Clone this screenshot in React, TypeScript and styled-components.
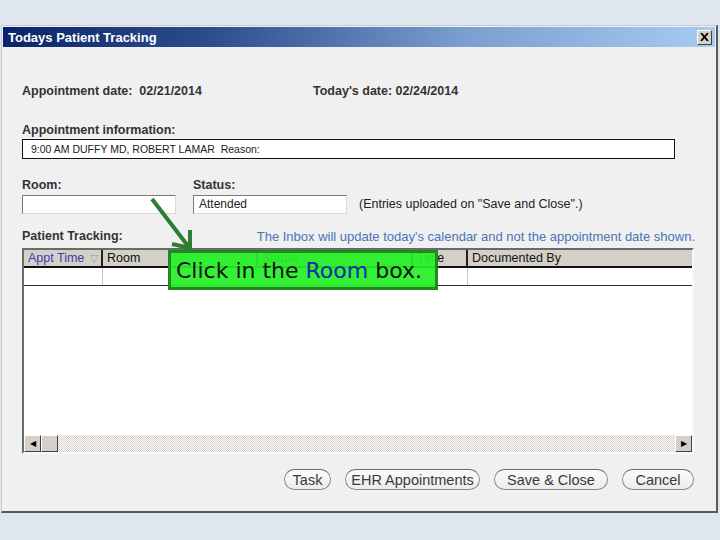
import React from "react";
import styled, { createGlobalStyle } from "styled-components";

const GlobalStyle = createGlobalStyle`
  html, body {
    margin: 0;
    padding: 0;
    background: #dfe6f0;
  }
  body {
    font-family: "Liberation Sans", Arial, sans-serif;
    width: 720px;
    height: 540px;
    overflow: hidden;
  }
`;

const Window = styled.div`
  position: relative;
  margin: 25px 0 0 1px;
  width: 717px;
  height: 488px;
  box-sizing: border-box;
  background: #f0f0f0;
  border-top: 1px solid #c8ccd2;
  border-left: 1px solid #c8ccd2;
  border-right: 2px solid #5a5a5a;
  border-bottom: 2px solid #5a5a5a;
  display: flex;
  flex-direction: column;
`;

const TitleBar = styled.div`
  margin: 1px 1px 0;
  height: 20px;
  display: flex;
  align-items: center;
  justify-content: space-between;
  padding: 0 3px 0 5px;
  background: linear-gradient(90deg, #0a246a 0%, #2e4e8e 30%, #7a9fd0 65%, #a8cbf1 100%);
`;

const Title = styled.span`
  color: #fff;
  font-size: 13px;
  font-weight: bold;
`;

const CloseBtn = styled.div`
  width: 15px;
  height: 15px;
  box-sizing: border-box;
  background: #d4d0c8;
  border: 1px solid;
  border-color: #fff #404040 #404040 #fff;
  display: flex;
  align-items: center;
  justify-content: center;
`;

const Content = styled.div`
  padding: 37px 21px 0 20px;
  display: flex;
  flex-direction: column;
`;

const DateRow = styled.div`
  display: flex;
  height: 14px;
  align-items: center;
`;

const DateItem = styled.div<{ $w?: number }>`
  width: ${(p) => (p.$w ? `${p.$w}px` : "auto")};
`;

const Label = styled.div<{ $mt?: number }>`
  font-size: 12.5px;
  font-weight: bold;
  color: #333;
  height: 14px;
  line-height: 14px;
  margin-top: ${(p) => p.$mt || 0}px;
  white-space: nowrap;
`;

const InfoBox = styled.div`
  margin-top: 2px;
  width: 653px;
  height: 20px;
  box-sizing: border-box;
  border: 1px solid #111;
  background: #fff;
  font-size: 10.5px;
  color: #222;
  line-height: 18px;
  padding-left: 8px;
  white-space: pre;
`;

const FieldRow = styled.div`
  margin-top: 19px;
  display: flex;
  align-items: flex-end;
`;

const Field = styled.div<{ $w: number }>`
  width: ${(p) => p.$w}px;
  display: flex;
  flex-direction: column;
`;

const TextBox = styled.div`
  margin-top: 3px;
  width: 154px;
  height: 19px;
  box-sizing: border-box;
  border: 1px solid;
  border-color: #7a7a7a #d8d8d8 #d8d8d8 #7a7a7a;
  background: #fff;
  font-size: 12px;
  color: #222;
  line-height: 17px;
  padding-left: 5px;
`;

const Note = styled.div`
  font-size: 12.5px;
  color: #222;
  height: 19px;
  line-height: 19px;
  margin-left: 12px;
  white-space: nowrap;
`;

const TrackRow = styled.div`
  margin-top: 15px;
  display: flex;
  justify-content: space-between;
  align-items: center;
  height: 14px;
`;

const InfoText = styled.span`
  font-size: 13px;
  color: #4a74b8;
  white-space: nowrap;
`;

const Table = styled.div`
  margin-top: 5px;
  width: 672px;
  height: 206px;
  box-sizing: border-box;
  border: 2px solid;
  border-color: #6a6a6a #f8f8f8 #f8f8f8 #6a6a6a;
  background: #fff;
  display: flex;
  flex-direction: column;
`;

const HeaderRow = styled.div`
  display: flex;
  height: 16px;
  background: #d4d0c8;
  border-bottom: 2px solid #111;
`;

const HeadCell = styled.div<{ $w: number; $blue?: boolean }>`
  width: ${(p) => p.$w}px;
  flex: ${(p) => (p.$w ? "none" : "1")};
  box-sizing: border-box;
  border-right: 2px solid #222;
  font-size: 12.5px;
  line-height: 16px;
  padding-left: 4px;
  color: ${(p) => (p.$blue ? "#3c3cb0" : "#111")};
  display: flex;
  justify-content: space-between;
  white-space: nowrap;
  &:last-child {
    border-right: none;
  }
`;

const SortMark = styled.span`
  color: #999;
  font-size: 11px;
  padding-right: 3px;
`;

const BodyRow = styled.div`
  display: flex;
  height: 17px;
  border-bottom: 1px solid #333;
`;

const BodyCell = styled.div<{ $w: number }>`
  width: ${(p) => p.$w}px;
  flex: ${(p) => (p.$w ? "none" : "1")};
  box-sizing: border-box;
  border-right: 1px solid #c8c8c8;
  &:last-child {
    border-right: none;
  }
`;

const Filler = styled.div`
  flex: 1;
`;

const ScrollBar = styled.div`
  height: 17px;
  display: flex;
  background-color: #ffffff;
  background-image: repeating-conic-gradient(#d4d0c8 0% 25%, #ffffff 0% 50%);
  background-size: 2px 2px;
`;

const ScrollBtn = styled.div`
  width: 17px;
  height: 17px;
  box-sizing: border-box;
  background: #d4d0c8;
  border: 1px solid;
  border-color: #fff #404040 #404040 #fff;
  display: flex;
  align-items: center;
  justify-content: center;
  font-size: 8px;
  color: #000;
`;

const Spacer = styled.div`
  flex: 1;
`;

const ButtonRow = styled.div`
  margin-top: 15px;
  display: flex;
  justify-content: flex-end;
  gap: 14px;
  padding-right: 1px;
`;

const Button = styled.div<{ $w: number }>`
  width: ${(p) => p.$w}px;
  height: 21px;
  box-sizing: border-box;
  border: 1.5px solid #8a8a8a;
  border-top-color: #6a6a6a;
  border-radius: 11px;
  background: linear-gradient(#fbfbfb, #ececec);
  font-size: 14.5px;
  color: #3a3a3a;
  display: flex;
  align-items: center;
  justify-content: center;
  white-space: nowrap;
`;

const Callout = styled.div`
  position: absolute;
  left: 166px;
  top: 224px;
  width: 270px;
  height: 40px;
  box-sizing: border-box;
  border: 3px solid #1f8a1f;
  background: rgba(38, 240, 38, 0.93);
  font-family: "DejaVu Sans", sans-serif;
  font-size: 22px;
  color: #111;
  display: flex;
  align-items: center;
  padding-left: 5px;
  white-space: nowrap;
`;

const Blue = styled.span`
  color: #0a2aa8;
`;

const Arrow = styled.svg`
  position: absolute;
  left: 140px;
  top: 168px;
`;

const cols = [79, 155, 155, 55, 0];

export default function App() {
  return (
    <>
      <GlobalStyle />
      <Window>
        <TitleBar>
          <Title>Todays Patient Tracking</Title>
          <CloseBtn>
            <svg width="9" height="8" viewBox="0 0 9 8">
              <path d="M1 0 L8 8 M8 0 L1 8" stroke="#000" strokeWidth="1.8" />
            </svg>
          </CloseBtn>
        </TitleBar>
        <Content>
          <DateRow>
            <DateItem $w={291}>
              <Label>Appointment date:&nbsp; 02/21/2014</Label>
            </DateItem>
            <DateItem>
              <Label>Today's date: 02/24/2014</Label>
            </DateItem>
          </DateRow>
          <Label $mt={25}>Appointment information:</Label>
          <InfoBox>9:00 AM DUFFY MD, ROBERT LAMAR  Reason:</InfoBox>
          <FieldRow>
            <Field $w={171}>
              <Label>Room:</Label>
              <TextBox />
            </Field>
            <Field $w={154}>
              <Label>Status:</Label>
              <TextBox>Attended</TextBox>
            </Field>
            <Note>(Entries uploaded on "Save and Close".)</Note>
          </FieldRow>
          <TrackRow>
            <Label>Patient Tracking:</Label>
            <InfoText>
              The Inbox will update today's calendar and not the appointment date shown.
            </InfoText>
          </TrackRow>
          <Table>
            <HeaderRow>
              <HeadCell $w={cols[0]} $blue>
                Appt Time <SortMark>▽</SortMark>
              </HeadCell>
              <HeadCell $w={cols[1]}>Room</HeadCell>
              <HeadCell $w={cols[2]}>Status</HeadCell>
              <HeadCell $w={cols[3]}>Time</HeadCell>
              <HeadCell $w={cols[4]}>Documented By</HeadCell>
            </HeaderRow>
            <BodyRow>
              {cols.map((w, i) => (
                <BodyCell key={i} $w={w} />
              ))}
            </BodyRow>
            <Filler />
            <ScrollBar>
              <ScrollBtn>◀</ScrollBtn>
              <ScrollBtn />
              <Spacer />
              <ScrollBtn>▶</ScrollBtn>
            </ScrollBar>
          </Table>
          <ButtonRow>
            <Button $w={47}>Task</Button>
            <Button $w={135}>EHR Appointments</Button>
            <Button $w={114}>Save &amp; Close</Button>
            <Button $w={72}>Cancel</Button>
          </ButtonRow>
        </Content>
        <Arrow width="60" height="60" viewBox="0 0 60 60">
          <line x1="10" y1="5" x2="46" y2="52" stroke="#2e7d32" strokeWidth="4" />
          <polyline
            points="30,50 48,54 48,36"
            fill="none"
            stroke="#2e7d32"
            strokeWidth="4"
            strokeLinejoin="miter"
          />
        </Arrow>
        <Callout>
          Click in the&nbsp;<Blue>Room</Blue>&nbsp;box.
        </Callout>
      </Window>
    </>
  );
}
